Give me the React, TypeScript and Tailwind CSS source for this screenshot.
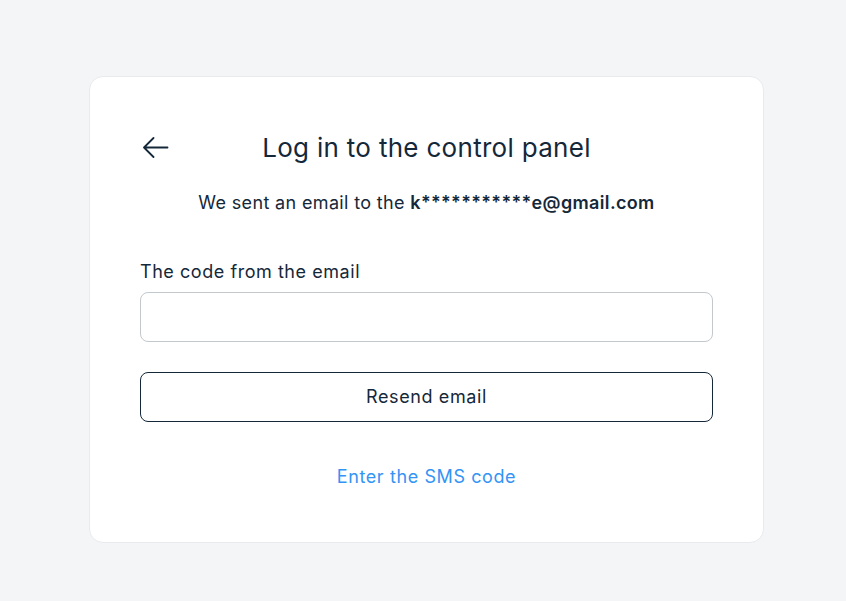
import React from "react";

export default function App() {
  return (
    <div
      className="min-h-[601px] w-full bg-[#f4f5f7] pt-[76px]"
      style={{ fontFamily: "Inter, 'Noto Sans', sans-serif" }}
    >
      <div className="ml-[89px] w-[675px] rounded-[14px] border border-[#e8eaee] bg-white px-[50px] pt-[55px] pb-[53px] text-[#15283a]">
        <div className="relative flex h-[32px] items-center justify-center">
          <button className="absolute left-[3px] top-[4px] flex h-[24px] w-[26px] items-center">
            <svg width="26" height="24" viewBox="0 0 26 24" fill="none">
              <path
                d="M1 11.5H24.5M10.5 2L1 11.5L10.5 21"
                stroke="#15283a"
                strokeWidth="1.8"
                strokeLinecap="round"
                strokeLinejoin="round"
              />
            </svg>
          </button>
          <h1 className="text-[26px] leading-[32px] font-normal tracking-[0.3px]">
            Log in to the control panel
          </h1>
        </div>
        <p className="mt-[27px] text-center text-[18px] leading-[24px] tracking-[0.35px]">
          We sent an email to the <span className="font-semibold">k***********e@gmail.com</span>
        </p>
        <label className="mt-[45px] block text-[18px] leading-[24px] tracking-[0.55px]">The code from the email</label>
        <input
          className="mt-[8px] block h-[50px] w-full rounded-[8px] border border-[#c3c8cd] bg-white px-4 text-[18px] outline-none"
          type="text"
        />
        <button className="mt-[30px] flex h-[50px] w-full items-center justify-center rounded-[8px] border border-[#15283a] bg-white text-[18px] leading-[24px] tracking-[0.6px]">
          Resend email
        </button>
        <div className="mt-[43px] text-center text-[18px] leading-[24px] tracking-[0.6px] text-[#3394f5]">
          Enter the SMS code
        </div>
      </div>
    </div>
  );
}
